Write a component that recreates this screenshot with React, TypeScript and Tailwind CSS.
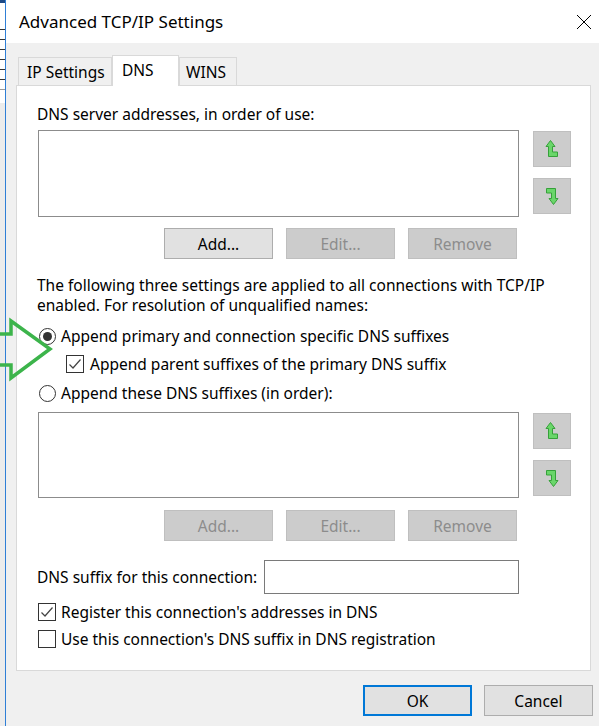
import type { ReactNode } from 'react';

function Radio({ checked }: { checked?: boolean }) {
  return (
    <span className="flex h-[17px] w-[17px] shrink-0 items-center justify-center rounded-full border border-[#333] bg-white">
      {checked && <span className="h-[9px] w-[9px] rounded-full bg-[#333]" />}
    </span>
  );
}

function Check({ checked }: { checked?: boolean }) {
  return (
    <span className="flex h-[18px] w-[18px] shrink-0 items-center justify-center border border-[#333] bg-white">
      {checked && (
        <svg width="14" height="14" viewBox="0 0 14 14">
          <path d="M1.5 7.5 L5 11 L12.5 2.5" fill="none" stroke="#444" strokeWidth="1.2" />
        </svg>
      )}
    </span>
  );
}

function Btn({ children, disabled, primary }: { children: ReactNode; disabled?: boolean; primary?: boolean }) {
  const cls = primary
    ? 'border-2 border-[#0078d7] bg-[#e1e1e1] text-black'
    : disabled
      ? 'border border-[#bfbfbf] bg-[#cccccc] text-[#8c8c8c]'
      : 'border border-[#adadad] bg-[#e1e1e1] text-black';
  return (
    <div className={`flex h-[31px] w-[109px] items-center justify-center ${cls}`}>{children}</div>
  );
}

function MoveIcon({ down }: { down?: boolean }) {
  return (
    <svg width="14" height="20" viewBox="0 0 14 20" className={down ? 'rotate-180' : ''}>
      <path
        d="M5.5 1.5 L10 7.5 L7.5 7.5 L7.5 13 L12.5 13 L12.5 17.5 L3.5 17.5 L3.5 7.5 L1 7.5 Z"
        fill="#6ad66a"
        stroke="#36a13a"
        strokeWidth="1"
        strokeLinejoin="round"
      />
    </svg>
  );
}

function ListWithArrows({ h }: { h: string }) {
  return (
    <div className="flex">
      <div className={`w-[481px] border border-[#8c8c8c] bg-white ${h}`} />
      <div className="ml-[14px] flex flex-col gap-[11px] pt-[1px]">
        <div className="flex h-[36px] w-[38px] items-center justify-center border border-[#bfbfbf] bg-[#cccccc]">
          <MoveIcon />
        </div>
        <div className="flex h-[36px] w-[38px] items-center justify-center border border-[#bfbfbf] bg-[#cccccc]">
          <MoveIcon down />
        </div>
      </div>
    </div>
  );
}

function ButtonRow({ addEnabled }: { addEnabled?: boolean }) {
  return (
    <div className="flex w-[481px] justify-end gap-[13px] pr-[2px]">
      <Btn disabled={!addEnabled}>Add...</Btn>
      <Btn disabled>Edit...</Btn>
      <Btn disabled>Remove</Btn>
    </div>
  );
}

export default function App() {
  return (
    <div className="relative flex h-[726px] w-[599px] overflow-hidden text-[15.5px] leading-[20px] text-black [font-family:'Noto_Sans',sans-serif]">
      {/* window behind the dialog */}
      <div className="flex w-[5px] shrink-0 flex-col bg-[#ececec]">
        <div className="h-[3px] bg-[#1e4a86]" />
        <div className="flex h-[100px] flex-col gap-[9px] bg-white pt-[26px]">
          <div className="h-px bg-[#333]" />
          <div className="h-px bg-[#333]" />
          <div className="h-px bg-[#333]" />
          <div className="h-px bg-[#333]" />
          <div className="h-px bg-[#333]" />
          <div className="h-px bg-[#333]" />
          <div className="h-px bg-[#999]" />
        </div>
      </div>

      {/* dialog */}
      <div className="flex flex-1 flex-col border-l border-[#2f7fd6] bg-[#f0f0f0]">
        <div className="flex h-[43px] items-center justify-between bg-white pl-[13px] pr-[7px]">
          <span className="text-[17px] leading-[24px]">Advanced TCP/IP Settings</span>
          <svg width="16" height="16" viewBox="0 0 16 16">
            <path d="M1 1 L15 15 M15 1 L1 15" stroke="#000" strokeWidth="1" />
          </svg>
        </div>

        <div className="pl-[10px] pt-[12px]">
          {/* tabs */}
          <div className="flex h-[30px] items-end pl-[2px]">
            <div className="h-[28px] w-[94px] border border-b-0 border-[#d9d9d9] bg-[#f0f0f0] pl-[8px] pt-[4px]">
              IP Settings
            </div>
            <div className="relative z-10 -mb-px h-[31px] w-[67px] border border-b-0 border-[#d9d9d9] bg-white pl-[9px] pt-[4px]">
              DNS
            </div>
            <div className="h-[28px] w-[58px] border border-b-0 border-[#d9d9d9] bg-[#f0f0f0] pl-[6px] pt-[4px]">
              WINS
            </div>
          </div>

          {/* panel */}
          <div className="h-[586px] w-[575px] border border-[#d9d9d9] bg-white pl-[21px] pt-[18px]">
            <div className="-ml-px">DNS server addresses, in order of use:</div>
            <div className="mt-[6px]">
              <ListWithArrows h="h-[87px]" />
            </div>
            <div className="mt-[11px]">
              <ButtonRow addEnabled />
            </div>
            <p className="-ml-px mt-[16px]">
              The following three settings are applied to all connections with TCP/IP
              <br />
              enabled. For resolution of unqualified names:
            </p>
            <div className="mt-[11px] flex items-center gap-[5px] pl-px">
              <Radio checked />
              <span>Append primary and connection specific DNS suffixes</span>
            </div>
            <div className="mt-[8px] flex items-center gap-[6px] pl-[28px]">
              <Check checked />
              <span>Append parent suffixes of the primary DNS suffix</span>
            </div>
            <div className="mt-[9px] flex items-center gap-[5px] pl-px">
              <Radio />
              <span>Append these DNS suffixes (in order):</span>
            </div>
            <div className="mt-[9px]">
              <ListWithArrows h="h-[86px]" />
            </div>
            <div className="mt-[12px]">
              <ButtonRow />
            </div>
            <div className="mt-[19px] flex w-[481px] items-center justify-between">
              <span className="-ml-px">DNS suffix for this connection:</span>
              <div className="h-[34px] w-[255px] border border-[#7a7a7a] bg-white" />
            </div>
            <div className="mt-[8px] flex items-center gap-[5px]">
              <Check checked />
              <span>Register this connection's addresses in DNS</span>
            </div>
            <div className="mt-[7px] flex items-center gap-[5px]">
              <Check />
              <span>Use this connection's DNS suffix in DNS registration</span>
            </div>
          </div>

          {/* footer */}
          <div className="mt-[14px] flex w-[577px] justify-end gap-[12px]">
            <Btn primary>OK</Btn>
            <Btn>Cancel</Btn>
          </div>
        </div>
      </div>

      {/* green annotation arrow */}
      <svg className="absolute left-0 top-[315px]" width="60" height="75" viewBox="0 0 60 75">
        <path
          d="M-2 19 L11 19 L11 6 L50 34 L11 63 L11 50 L-2 50"
          fill="none"
          stroke="#3cb44b"
          strokeWidth="3.5"
          strokeLinejoin="miter"
        />
      </svg>
    </div>
  );
}
